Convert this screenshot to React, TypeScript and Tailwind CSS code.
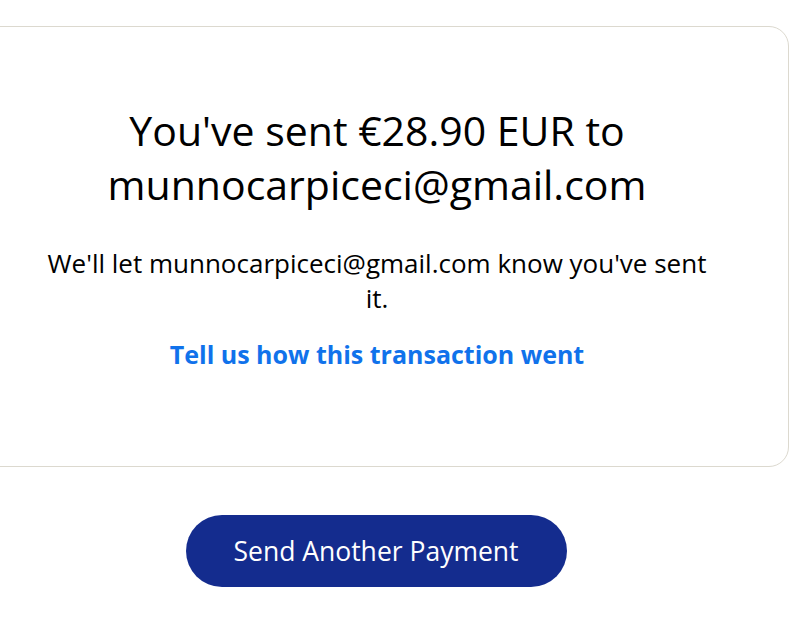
export default function App() {
  return (
    <div
      className="min-h-[631px] w-full overflow-hidden bg-white text-black"
      style={{ fontFamily: '"Open Sans", "Noto Sans", sans-serif' }}
    >
      {/* Confirmation card */}
      <div className="mt-[26px] ml-[-35px] flex h-[441px] w-[824px] flex-col items-center rounded-[20px] border border-[#dcd9cf] pt-[76px]">
        <h1 className="w-[560px] text-center text-[41px] leading-[54px] font-normal">
          You've sent €28.90 EUR to munnocarpiceci@gmail.com
        </h1>
        <p className="mt-[35px] w-[680px] text-center text-[26px] leading-[35px]">
          We'll let munnocarpiceci@gmail.com know you've sent it.
        </p>
        <a href="#" className="mt-[23px] text-[25px] leading-[30px] font-bold text-[#1072eb]">
          Tell us how this transaction went
        </a>
      </div>

      {/* Action */}
      <div className="mt-[48px] flex justify-center pr-[45px]">
        <button className="h-[72px] w-[381px] rounded-full bg-[#142c8e] pt-[2px] text-[26.5px] text-white">
          Send Another Payment
        </button>
      </div>
    </div>
  );
}
